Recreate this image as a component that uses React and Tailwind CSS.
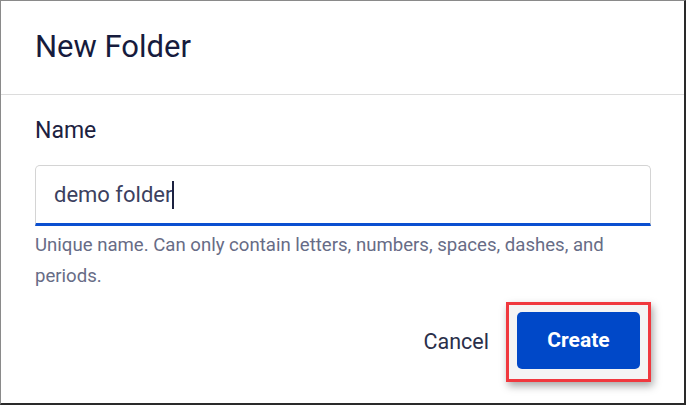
export default function App() {
  return (
    <div
      className="w-[686px] h-[405px] bg-white border-l border-t border-[#8a8a8a] border-r-2 border-b-2 border-r-[#2a2a2a] border-b-[#2a2a2a] flex flex-col"
      style={{ fontFamily: "Roboto, 'Liberation Sans', sans-serif" }}
    >
      {/* header */}
      <div className="h-[94px] shrink-0 border-b border-[#dcdcdc] flex items-center pl-[34px]">
        <h1 className="text-[31px] text-[#161b3d] leading-none pb-[3px]">New Folder</h1>
      </div>

      <div className="pl-[34px] pr-[33px] pt-[20px] flex flex-col">
        <label className="text-[23px] text-[#1c2140] leading-[32px]">Name</label>
        <div className="mt-[18px] h-[61px] rounded-t-[5px] border border-[#d4d4d4] border-b-[3px] border-b-[#0a4fd0] flex items-center pl-[18px]">
          <span className="text-[22px] text-[#3c4160]">demo folder</span>
          <span className="w-[2px] h-[28px] bg-[#1c2140]" />
        </div>
        <p className="mt-[4px] text-[18.6px] leading-[31px] text-[#676c86]">
          Unique name. Can only contain letters, numbers, spaces, dashes, and
          periods.
        </p>
      </div>

      {/* footer */}
      <div className="flex items-center justify-end pr-[33px] mt-[10px] gap-[16px]">
        <button className="text-[21.5px] text-[#2a2f4a] px-[1px]">Cancel</button>
        <div className="border-[3px] border-[#f0383e] pl-[8px] pr-[8px] pt-[7px] pb-[10px] bg-[#f4f4f4] shadow-[2px_4px_8px_rgba(0,0,0,0.35)]">
          <button className="w-[123px] h-[57px] rounded-[5px] bg-[#0048c8] text-white text-[21px] font-bold">
            Create
          </button>
        </div>
      </div>
    </div>
  );
}
